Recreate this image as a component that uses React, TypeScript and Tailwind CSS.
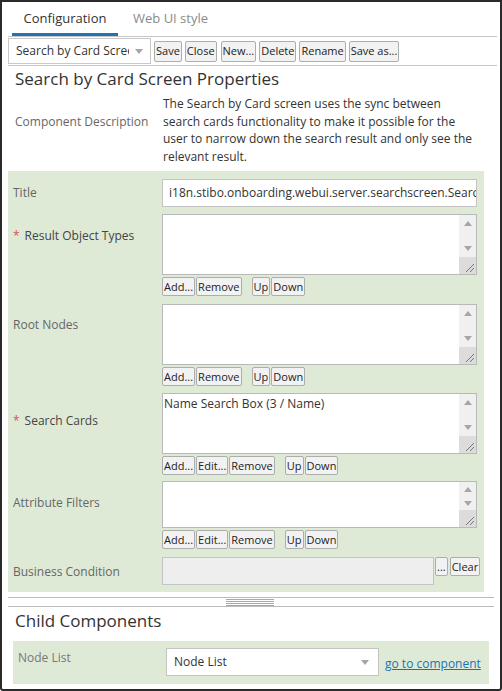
import type { ReactNode } from 'react'

const font = { fontFamily: '"Open Sans", "Noto Sans", sans-serif' }

function Btn({ children, className = '' }: { children: ReactNode; className?: string }) {
  return (
    <button
      className={`h-[19px] rounded-[2px] border border-[#adadad] bg-[#f2f2f2] px-[1px] text-[11px] leading-[16px] text-[#222] ${className}`}
    >
      {children}
    </button>
  )
}

function Arrow({ up }: { up?: boolean }) {
  return (
    <svg width="8" height="5" viewBox="0 0 8 5">
      <path d={up ? 'M0 5 L4 0 L8 5 Z' : 'M0 0 L4 5 L8 0 Z'} fill="#a6a6a6" />
    </svg>
  )
}

function ListBox({ h, children }: { h: string; children?: ReactNode }) {
  return (
    <div className={`flex ${h} w-[315px] border border-[#b9b9b9] bg-white`}>
      <div className="flex-1 px-[1px] pt-[2px] text-[12px] leading-[16px] text-[#333]">{children}</div>
      <div className="flex w-[17px] flex-col bg-[#f0f0f0]">
        <div className="flex h-[17px] min-h-0 shrink items-center justify-center">
          <Arrow up />
        </div>
        <div className="flex-1" />
        <div className="flex h-[17px] min-h-0 shrink items-center justify-center">
          <Arrow />
        </div>
        <div className="flex h-[17px] shrink-0 items-end justify-end bg-[#dcdcdc] p-[2px]">
          <svg width="9" height="9" viewBox="0 0 9 9">
            <path d="M1 9 L9 1 M5 9 L9 5" stroke="#777" strokeWidth="1" />
          </svg>
        </div>
      </div>
    </div>
  )
}

function Label({ children, req, pt }: { children: ReactNode; req?: boolean; pt: string }) {
  return (
    <div className={`w-[154px] shrink-0 pl-[5px] ${pt} text-[12px] leading-[16px] text-[#666]`}>
      {req && <span className="mr-[5px] text-[#d9534f]">*</span>}
      <span className={req ? 'text-[#444]' : ''}>{children}</span>
    </div>
  )
}

function ListRow({
  label,
  req,
  pt,
  h,
  edit,
  content,
  mb,
}: {
  label: string
  req?: boolean
  pt: string
  h: string
  edit?: boolean
  content?: string
  mb: string
}) {
  return (
    <div className={`flex ${mb}`}>
      <Label req={req} pt={pt}>
        {label}
      </Label>
      <div className="flex flex-col gap-[2px]">
        <ListBox h={h}>{content}</ListBox>
        <div className="flex gap-[1px]">
          <Btn>Add...</Btn>
          {edit && <Btn>Edit...</Btn>}
          <Btn>Remove</Btn>
          <Btn className="ml-[9px]">Up</Btn>
          <Btn>Down</Btn>
        </div>
      </div>
    </div>
  )
}

export default function App() {
  return (
    <div style={font} className="h-[691px] w-[502px] overflow-hidden rounded-b-[3px] border-2 border-[#2a2a2a] bg-white">
      {/* tabs */}
      <div className="ml-[6px] mr-[3px] flex h-[35px] border-b border-[#c6c6c6] pl-[4px] text-[13px]">
        <div className="flex w-[106px] items-center justify-center border-b-[3px] border-[#1f74b5] pt-[2px] text-[#333]">
          Configuration
        </div>
        <div className="flex items-center px-[15px] pb-[1px] text-[#8a8a8a]">Web UI style</div>
      </div>

      {/* toolbar */}
      <div className="ml-[6px] mr-[3px] flex h-[29px] items-center gap-[3px] border-b border-[#c6c6c6]">
        <div className="flex h-[26px] w-[143px] items-center border border-[#c9c9c9] bg-white pl-[7px] pr-[4px] text-[12px] text-[#333]">
          <span className="w-[113px] overflow-hidden whitespace-nowrap">Search by Card Screen</span>
          <span className="ml-[6px]">
            <Arrow />
          </span>
        </div>
        <Btn className="h-[21px]">Save</Btn>
        <Btn className="h-[21px]">Close</Btn>
        <Btn className="ml-[1px] h-[21px]">New...</Btn>
        <Btn className="h-[21px]">Delete</Btn>
        <Btn className="h-[21px]">Rename</Btn>
        <Btn className="h-[21px]">Save as...</Btn>
      </div>

      <div className="px-[13px] pt-[1px] text-[17px] leading-[24px] text-[#333]">
        Search by Card Screen Properties
      </div>

      <div className="flex pb-[6px] pl-[8px] pt-[4px]">
        <div className="w-[153px] shrink-0 pl-[5px] pt-[18px] text-[12px] text-[#666]">Component Description</div>
        <div className="w-[312px] text-[12px] leading-[17.5px] text-[#333]">
          The Search by Card screen uses the sync between search cards functionality to make it possible for the
          user to narrow down the search result and only see the relevant result.
        </div>
      </div>

      {/* properties panel */}
      <div className="ml-[6px] w-[476px] bg-[#deead6] pb-[7px] pt-[8px]">
        <div className="mb-[7px] flex">
          <Label pt="pt-[6px]">Title</Label>
          <div className="flex h-[28px] w-[315px] items-center overflow-hidden whitespace-nowrap border border-[#c4c4c4] bg-white pl-[6px] text-[12px] text-[#333]">
            i18n.stibo.onboarding.webui.server.searchscreen.SearchByCardScreen
          </div>
        </div>
        <ListRow label="Result Object Types" req pt="pt-[14px]" h="h-[61px]" mb="mb-[8px]" />
        <ListRow label="Root Nodes" pt="pt-[13px]" h="h-[61px]" mb="mb-[7px]" />
        <ListRow
          label="Search Cards"
          req
          pt="pt-[20px]"
          h="h-[61px]"
          edit
          content="Name Search Box (3 / Name)"
          mb="mb-[6px]"
        />
        <ListRow label="Attribute Filters" pt="pt-[14px]" h="h-[47px]" edit mb="mb-[8px]" />
        <div className="flex">
          <Label pt="pt-[7px]">Business Condition</Label>
          <div className="h-[28px] w-[272px] border border-[#c4c4c4] bg-[#eeeeee]" />
          <Btn className="ml-[1px] px-[1px]">...</Btn>
          <Btn className="ml-[2px]">Clear</Btn>
        </div>
      </div>

      {/* splitter */}
      <div className="relative ml-[6px] mr-[6px] mt-[5px] h-[10px] border-y border-[#bcbcbc]">
        <div className="absolute left-[218px] top-[1px] flex w-[48px] flex-col gap-[1px]">
          <div className="h-px bg-[#a8a8a8]" />
          <div className="h-px bg-[#a8a8a8]" />
          <div className="h-px bg-[#a8a8a8]" />
          <div className="h-px bg-[#a8a8a8]" />
        </div>
      </div>

      <div className="px-[13px] pt-[2px] text-[17px] leading-[24px] text-[#333]">Child Components</div>

      <div className="ml-[11px] mt-[8px] flex h-[43px] w-[476px] bg-[#deead6] pt-[7px]">
        <div className="w-[153px] shrink-0 pl-[5px] pt-[1px] text-[12px] text-[#777]">Node List</div>
        <div className="flex h-[28px] w-[213px] items-center justify-between border border-[#c4c4c4] bg-white pl-[7px] pr-[9px] text-[12px] text-[#333]">
          Node List
          <Arrow />
        </div>
        <a className="ml-[6px] pt-[7px] text-[12px] text-[#1a73b8] underline">go to component</a>
      </div>
    </div>
  )
}
